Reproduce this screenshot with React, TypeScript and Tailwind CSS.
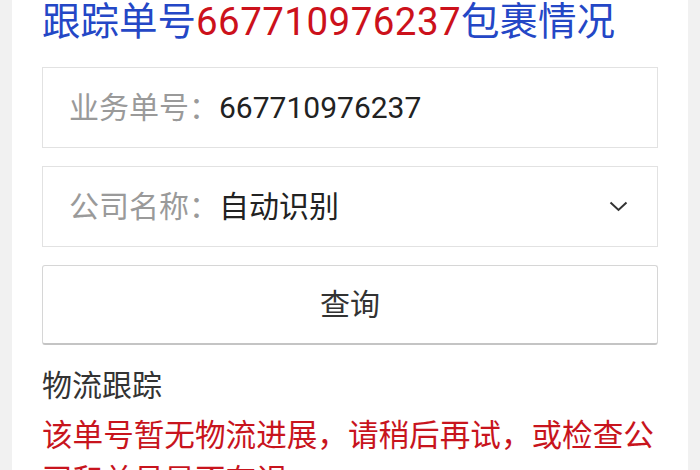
import React from "react";

const font = { fontFamily: 'Roboto, "Noto Sans CJK SC", sans-serif' };

export default function App() {
  return (
    <div className="w-[700px] h-[470px] overflow-hidden bg-[#f1f1f1]" style={font}>
      <div className="mx-[12px] h-full bg-white px-[30px] pt-[1px]">
        <div className="h-[42px] leading-[42px] text-[38.5px] text-[#2447c6] whitespace-nowrap">
          跟踪单号<span className="text-[#cc111b] tracking-[0.45px]">667710976237</span>包裹情况
        </div>

        <div className="mt-[24px] h-[81px] border border-[#e2e2e2] flex items-center pl-[26px] text-[30px]">
          <span className="text-[#9a9a9a]">业务单号：</span>
          <span className="text-[#222]">667710976237</span>
        </div>

        <div className="mt-[18px] h-[81px] border border-[#e2e2e2] flex items-center pl-[26px] pr-[29px] text-[30px]">
          <span className="text-[#9a9a9a]">公司名称：</span>
          <span className="text-[#222]">自动识别</span>
          <svg className="ml-auto" width="19" height="11" viewBox="0 0 19 11">
            <polyline points="1.5,1.5 9.5,9 17.5,1.5" fill="none" stroke="#333" strokeWidth="2" />
          </svg>
        </div>

        <div className="mt-[18px] h-[80px] rounded-[3px] border border-[#d6d6d6] border-b-[2px] border-b-[#c4c4c4] flex items-center justify-center text-[30px] text-[#333]">
          查询
        </div>

        <div className="mt-[21px] h-[40px] leading-[40px] text-[30px] text-[#333]">物流跟踪</div>
        <div className="mt-[7px] leading-[45px] text-[30.6px] text-[#c8141d]">
          该单号暂无物流进展，请稍后再试，或检查公司和单号是否有误。
        </div>
      </div>
    </div>
  );
}
